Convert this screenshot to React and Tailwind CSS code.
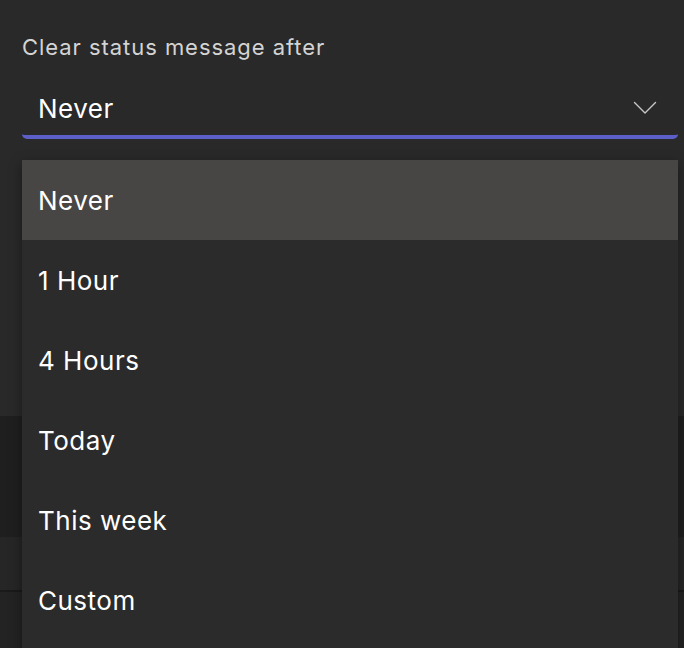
import React, { useState } from 'react';

const options = ['Never', '1 Hour', '4 Hours', 'Today', 'This week', 'Custom'];

function Chevron() {
  return (
    <svg width="24" height="14" viewBox="0 0 24 14" fill="none">
      <path d="M1.5 1.5 L12 12 L22.5 1.5" stroke="#c8c8c8" strokeWidth="1.4" strokeLinecap="round" strokeLinejoin="round" />
    </svg>
  );
}

export default function App() {
  const [selected, setSelected] = useState('Never');

  return (
    <div className="relative h-[648px] w-[684px] overflow-hidden bg-[#292929] font-['Inter',sans-serif]">
      {/* panel behind the dropdown */}
      <div className="h-[416px] bg-[#292929] pl-[22px] pr-[6px] pt-[33px]">
        <div className="text-[22px] leading-[28px] tracking-[0.95px] text-[#d4d4d4]">Clear status message after</div>
        <div className="mt-[16px] flex h-[62px] items-center justify-between rounded-b-[5px] border-b-[4px] border-[#5b5fc7] pl-[16px] pr-[21px] pt-[4px]">
          <span className="text-[26px] tracking-[0.5px] text-white">{selected}</span>
          <Chevron />
        </div>
      </div>
      <div className="h-[121px] bg-[#1f1f1f]" />
      <div className="h-[53px] bg-[#262626]" />
      <div className="h-[2px] bg-[#1a1a1a]" />
      <div className="h-[56px] bg-[#232323]" />

      {/* dropdown menu */}
      <div className="absolute left-[22px] top-[160px] w-[656px] bg-[#2b2b2b] pb-[20px] shadow-[0_4px_12px_rgba(0,0,0,0.4)]">
        {options.map((opt) => (
          <div
            key={opt}
            onClick={() => setSelected(opt)}
            className={
              opt === selected
                ? 'flex h-[80px] items-center bg-[#484644] pl-[16px] text-[26px] tracking-[0.5px] text-white'
                : 'flex h-[80px] items-center pl-[16px] text-[26px] tracking-[0.5px] text-white'
            }
          >
            {opt}
          </div>
        ))}
      </div>
    </div>
  );
}
